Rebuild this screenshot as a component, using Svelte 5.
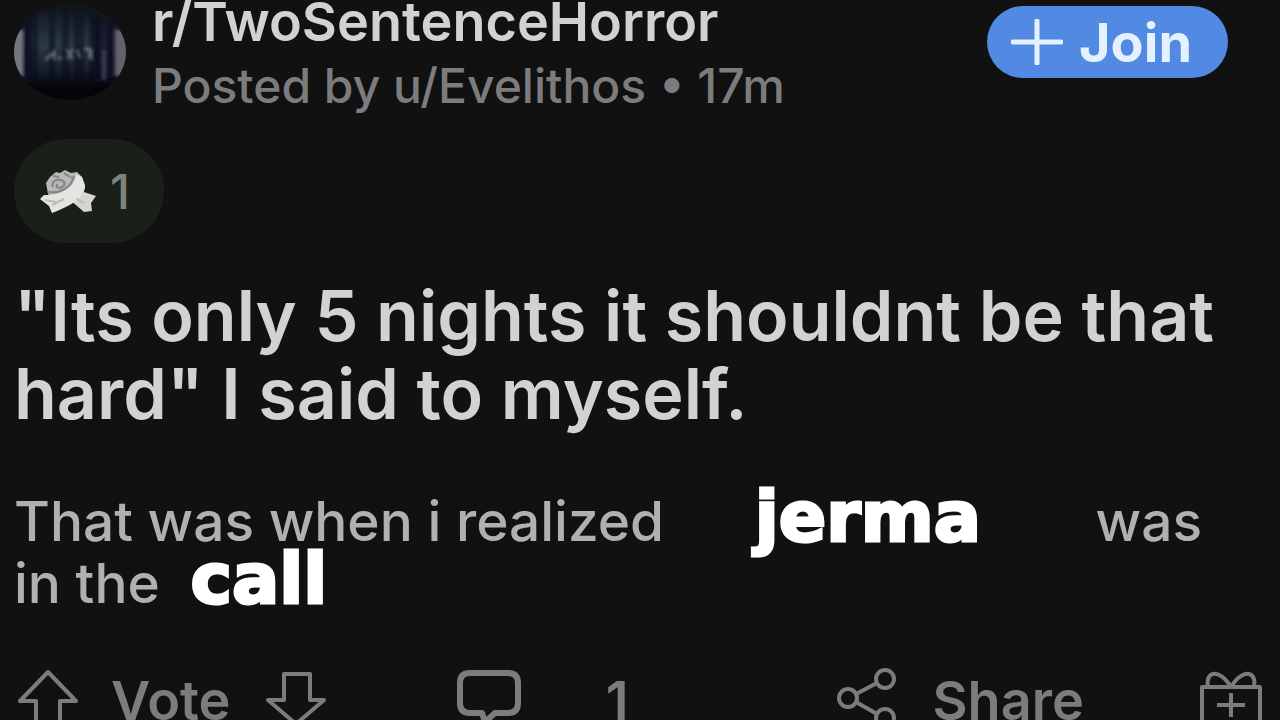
<script lang="ts">
  const post = {
    community: 'r/TwoSentenceHorror',
    byline: 'Posted by u/Evelithos • 17m',
    awards: 1,
    comments: 1
  };
</script>

<main class="post">
  <header class="head">
    <svg class="avatar" viewBox="0 0 112 96" aria-hidden="true">
      <defs>
        <clipPath id="round"><ellipse cx="56" cy="48" rx="56" ry="48" /></clipPath>
        <linearGradient id="night" x1="0" y1="0" x2="0" y2="1">
          <stop offset="0" stop-color="#10131a" />
          <stop offset="0.4" stop-color="#17202c" />
          <stop offset="0.7" stop-color="#0e1320" />
          <stop offset="0.88" stop-color="#050507" />
        </linearGradient>
        <linearGradient id="trunk" x1="0" y1="0" x2="0" y2="1">
          <stop offset="0" stop-color="#26323f" stop-opacity="0" />
          <stop offset="0.5" stop-color="#2b3a48" />
          <stop offset="1" stop-color="#1d2636" stop-opacity="0" />
        </linearGradient>
        <filter id="haze" x="-10%" width="120%"><feGaussianBlur stdDeviation="1.5" /></filter>
      </defs>
      <g clip-path="url(#round)">
        <rect width="112" height="96" fill="url(#night)" />
        <g filter="url(#haze)">
          <rect x="-6" y="26" width="15" height="46" fill="#74747e" />
          <rect x="101" y="26" width="17" height="46" fill="#62626d" />
          <rect x="10" y="12" width="6" height="66" fill="#080a25" />
          <rect x="24" y="4" width="11" height="76" fill="url(#trunk)" />
          <rect x="41" y="4" width="7" height="76" fill="url(#trunk)" />
          <rect x="55" y="4" width="5" height="76" fill="url(#trunk)" />
          <rect x="70" y="6" width="5" height="74" fill="url(#trunk)" />
          <rect x="80" y="12" width="6" height="66" fill="#070823" />
          <rect x="88" y="46" width="4" height="30" fill="#343c4f" />
          <rect x="94" y="18" width="5" height="56" fill="#090a25" />
          <path d="M32 56l8-8v8M44 54h4M52 45l7 10M59 45l-6 10M63 46l3 8M70 45h6v9M77 45v11" fill="none" stroke="#6c7580" stroke-width="2" />
        </g>
      </g>
    </svg>
    <div class="who">
      <a class="community" href="#community">{post.community}</a>
      <p class="byline">{post.byline}</p>
    </div>
    <button class="join" type="button">
      <svg width="52" height="46" viewBox="0 0 52 46" aria-hidden="true">
        <path d="M2 23h48M26 2v42" stroke="#e4f2ff" stroke-width="5" stroke-linecap="round" />
      </svg>
      Join
    </button>
  </header>

  <button class="award" type="button" aria-label="Awards">
    <svg width="56" height="44" viewBox="0 0 56 44" aria-hidden="true">
      <path d="M30 31l14-8 12 4-5 7 1 8-8 1z" fill="#d6d5d2" />
      <path d="M8 25l-2-11 4-6 6-5 4 1 5-3 6 3 6-1 5 5 2 10-3 9-12 6-14 1z" fill="#b9b8b8" />
      <path d="M36 5l6 3 3 8c1 12-14 21-33 28l-3-7-9-7 4-4c16 1 31-7 32-21z" fill="#e6e4e1" />
      <path d="M8 23c12 2 24-5 26-16M13 18c-2-6 4-8 8-7s5 5 1 7-6 0-5-3M13 7l6 1M24 4l6 4M34 10l-3-2" fill="none" stroke="#858588" stroke-width="2" />
      <path d="M12 36l12-6M5 31l11 2M44 34l-8-4" stroke="#bdbcb9" stroke-width="2" />
    </svg>
    <span>{post.awards}</span>
  </button>

  <h1>"Its only 5 nights it shouldnt be that hard" I said to myself.</h1>

  <p class="body">
    That was when i realized <strong class="name">jerma</strong> was<br />in the <strong class="place">call</strong>
  </p>

  <footer class="actions">
    <div class="group vote">
      <button type="button" aria-label="Upvote">
        <svg width="66" height="66" viewBox="0 0 66 66" aria-hidden="true">
          <path d="M34 4L6 33h16v29h24V33h16z" />
        </svg>
      </button>
      <span>Vote</span>
      <button type="button" aria-label="Downvote">
        <svg width="66" height="66" viewBox="0 0 66 66" aria-hidden="true">
          <path d="M34 56L6 32h16V6h26v26h14z" />
        </svg>
      </button>
    </div>
    <button class="group comment" type="button" aria-label="Comments">
      <svg width="66" height="66" viewBox="0 0 66 66" aria-hidden="true">
        <path class="bold" d="M14 5h38q10 0 10 10v20q0 10-10 10H39l-10 9-3-9H14Q4 45 4 35V15Q4 5 14 5z" />
      </svg>
      <span>{post.comments}</span>
    </button>
    <button class="group share" type="button">
      <svg width="64" height="66" viewBox="0 0 64 66" aria-hidden="true">
        <circle cx="11" cy="30" r="9" />
        <circle cx="48" cy="11" r="9" />
        <circle cx="48" cy="50" r="9" />
        <path d="M19 26l21-11M19 34l21 12" />
      </svg>
      <span>Share</span>
    </button>
    <button class="group" type="button" aria-label="Give award">
      <svg width="66" height="66" viewBox="0 0 66 66" aria-hidden="true">
        <path d="M2 19h58v44H2zM31 19C25 9 18 5 13 6S7 13 8 18M31 19C37 9 44 5 49 6S55 13 54 18M17 37h28M31 25v24" />
      </svg>
    </button>
  </footer>
</main>

<style>
  :global(body) {
    margin: 0;
    background: #111111;
  }

  .post {
    box-sizing: border-box;
    height: 100vh;
    overflow: hidden;
    padding: 0 14px;
    background: #111111;
    color: #d2d2d4;
    font-family: Inter, Roboto, sans-serif;
  }

  button {
    display: flex;
    align-items: center;
    margin: 0;
    padding: 0;
    border: 0;
    background: none;
    color: inherit;
    font: inherit;
  }

  .head {
    display: flex;
    align-items: flex-start;
    padding-right: 38px;
  }

  .avatar {
    flex: none;
    width: 112px;
    height: 96px;
    margin-top: 4px;
  }

  .who {
    flex: 1;
    margin-left: 26px;
    white-space: nowrap;
  }

  .community {
    display: block;
    color: #d2d2d4;
    font-size: 54px;
    font-weight: 600;
    line-height: 56px;
    text-decoration: none;
    margin-top: -6px;
  }

  .byline {
    margin: 8px 0 0;
    color: #7c7c7e;
    font-size: 48px;
    font-weight: 500;
    line-height: 56px;
  }

  .join {
    flex: none;
    gap: 16px;
    height: 72px;
    margin-top: 6px;
    padding: 0 36px 0 24px;
    border-radius: 36px;
    background: #5189e3;
    color: #e4f2ff;
    font-size: 54px;
    font-weight: 700;
  }

  .award {
    gap: 14px;
    height: 104px;
    margin-top: 25px;
    padding: 0 34px 0 26px;
    border-radius: 52px;
    background: #1b1f1a;
    color: #7e8380;
    font-size: 48px;
    font-weight: 500;
  }

  h1 {
    margin: 34px 0 0;
    font-size: 70px;
    font-weight: 600;
    line-height: 78px;
  }

  .body {
    margin: 57px 0 0;
    color: #b0b0b3;
    font-size: 55px;
    font-weight: 500;
    line-height: 62px;
    white-space: nowrap;
  }

  .body strong {
    color: #ffffff;
    font-family: "DejaVu Sans", sans-serif;
    font-size: 70px;
    font-weight: 700;
    line-height: 1px;
    -webkit-text-stroke: 3px #ffffff;
  }

  .name {
    margin: 0 100px 0 76px;
  }

  .place {
    margin-left: 16px;
  }

  .actions {
    display: grid;
    grid-template-columns: 440fr 380fr 361fr 66px;
    margin-top: 54px;
    color: #7c7c7e;
    font-size: 54px;
    font-weight: 600;
    line-height: 66px;
  }

  .group {
    display: flex;
    align-items: center;
    gap: 31px;
  }

  .comment {
    gap: 84px;
  }

  .actions svg {
    display: block;
    fill: none;
    stroke: #7c7c7e;
    stroke-width: 4;
    stroke-linejoin: round;
  }

  .actions .bold {
    stroke-width: 6;
  }
</style>
